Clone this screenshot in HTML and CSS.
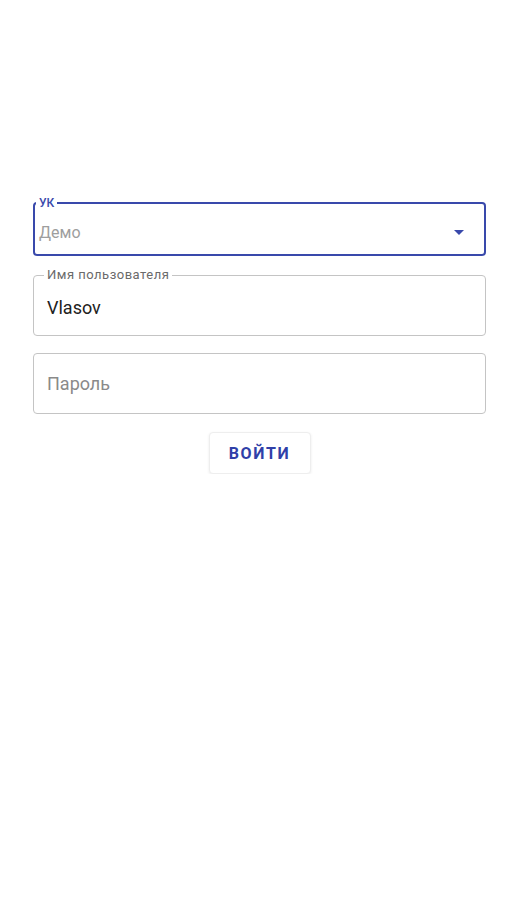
FILE: index.html
```html
<!DOCTYPE html>
<html>
<head>
    <meta charset="utf-8">
    <title>Вход</title>
    <link rel="stylesheet" href="styles.css">
</head>
<body>
    <div class="login-form">
        <fieldset class="field field-select">
            <legend>УК</legend>
            <div class="field-row">
                <span class="value placeholder">Демо</span>
                <svg class="arrow" width="10" height="5" viewBox="0 0 10 5"><path d="M0 0h10L5 5z" fill="#3949ab"/></svg>
            </div>
        </fieldset>

        <fieldset class="field field-text">
            <legend>Имя пользователя</legend>
            <div class="field-row">
                <span class="value">Vlasov</span>
            </div>
        </fieldset>

        <fieldset class="field field-plain">
            <div class="field-row">
                <span class="value placeholder">Пароль</span>
            </div>
        </fieldset>

        <div class="actions">
            <button class="btn-login">Войти</button>
        </div>
    </div>
</body>
</html>
```

FILE: styles.css
```css
body {
    margin: 0;
    background: #fff;
    font-family: Roboto, "Liberation Sans", sans-serif;
}
.login-form {
    padding: 196px 34px 0 33px;
}
.field {
    margin: 0;
    min-width: 0;
    border: 1px solid #c4c4c4;
    border-radius: 4px;
    padding: 0 10px;
}
.field legend {
    font-size: 13px;
    line-height: 14px;
    letter-spacing: 0.5px;
    padding: 0 3px;
    color: #6a6a6a;
}
.field-row {
    display: flex;
    align-items: center;
}
.value {
    font-size: 18px;
    color: #212121;
}
.placeholder {
    color: #8a8a8a;
}
.field-select {
    border: 2px solid #3949ab;
    padding: 0 20px 0 4px;
}
.field-select legend {
    margin-left: -3px;
    font-size: 12px;
    letter-spacing: 0;
    color: #3949ab;
    font-weight: 500;
}
.field-select .field-row {
    height: 44px;
    justify-content: space-between;
}
.field-select .value {
    font-size: 16px;
    color: #9e9e9e;
}
.field-text {
    margin-top: 12px;
}
.field-text .field-row {
    height: 53px;
    padding-left: 3px;
    padding-bottom: 3px;
    box-sizing: border-box;
}
.field-plain {
    margin-top: 17px;
}
.field-plain .field-row {
    height: 59px;
    padding-left: 3px;
}
.actions {
    display: flex;
    justify-content: center;
    margin-top: 18px;
}
.btn-login {
    width: 102px;
    height: 42px;
    background: #fff;
    border: 1px solid #eee;
    border-radius: 4px;
    box-shadow: 0 1px 3px rgba(0,0,0,0.08);
    color: #303fa8;
    font-family: Roboto, "Liberation Sans", sans-serif;
    font-weight: bold;
    font-size: 16px;
    letter-spacing: 1.6px;
    text-transform: uppercase;
    cursor: pointer;
}
```
